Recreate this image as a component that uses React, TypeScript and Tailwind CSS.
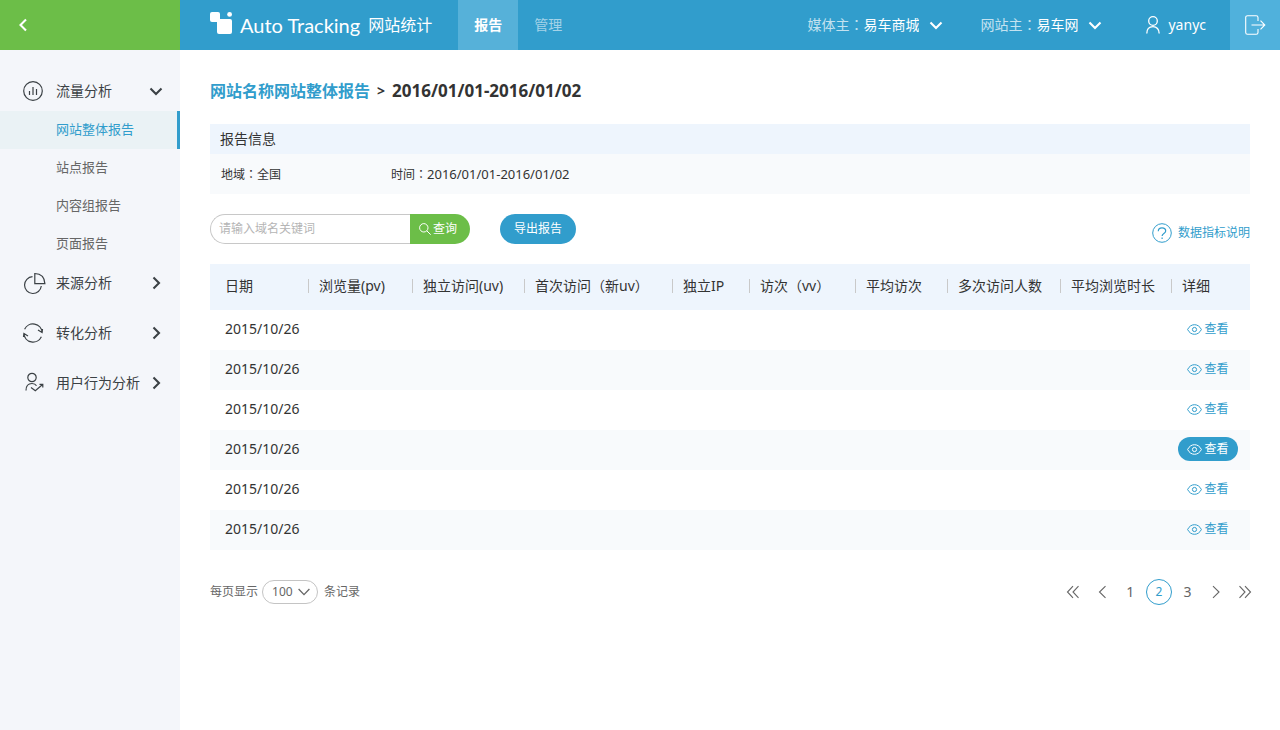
import type { ReactNode } from 'react';

type IconProps = { className?: string };

function Chevron({ dir, className = '' }: { dir: 'left' | 'right' | 'down'; className?: string }) {
  const paths = { left: 'M10 1.500 4.500 7l5.500 5.500', right: 'M4.500 1.500 10 7l-5.500 5.500', down: 'M1.500 4.500 7 10l5.500-5.500' };
  return (
    <svg viewBox="0 0 14 14" fill="none" stroke="currentColor" strokeWidth="2.100" className={`size-3.5 shrink-0 ${className}`} aria-hidden="true">
      <path d={paths[dir]} />
    </svg>
  );
}

function LogoMark() {
  return (
    <svg width="22" height="22" viewBox="0 0 22 22" fill="white" aria-hidden="true" className="shrink-0">
      <rect x="0" y="0" width="10" height="10" rx="2" />
      <rect x="7" y="7" width="15" height="15" rx="2" />
      <circle cx="19.6" cy="2.4" r="2.4" />
    </svg>
  );
}

function UserIcon() {
  return (
    <svg width="14" height="18" viewBox="0 0 14 18" fill="none" stroke="currentColor" strokeWidth="1.3" aria-hidden="true">
      <circle cx="7" cy="5" r="4.3" />
      <path d="M.8 17.6c0-4.4 2.5-7 6.2-7s6.2 2.600 6.200 7" />
    </svg>
  );
}

function LogoutIcon() {
  return (
    <svg width="21" height="20" viewBox="0 0 21 20" fill="none" stroke="currentColor" strokeWidth="1.100" aria-hidden="true">
      <path d="M13 6V2.500A1.800 1.800 0 0 0 11.200.7H2.500A1.800 1.800 0 0 0 .7 2.500v15a1.800 1.800 0 0 0 1.800 1.800h8.700a1.800 1.800 0 0 0 1.800-1.800V14" />
      <path d="M6.500 10h13.300M15.500 5.700 19.800 10l-4.300 4.300" />
    </svg>
  );
}

function TrafficIcon({ className }: IconProps) {
  return (
    <svg viewBox="0 0 22 22" fill="none" stroke="currentColor" strokeWidth="1.200" className={className} aria-hidden="true">
      <circle cx="11" cy="11" r="9.300" />
      <path d="M7.500 11v4M11 7v8M14.500 9v6" />
    </svg>
  );
}

function SourceIcon({ className }: IconProps) {
  return (
    <svg viewBox="0 0 22 22" fill="none" stroke="currentColor" strokeWidth="1.200" className={className} aria-hidden="true">
      <path d="M10.500 4.700a8.400 8.400 0 1 0 8.800 9.300" />
      <path d="M12.800 1.500v10.100h10.100C22.600 5.600 18.900 1.700 12.800 1.500z" />
    </svg>
  );
}

function ConvertIcon({ className }: IconProps) {
  return (
    <svg viewBox="0 0 22 22" fill="none" stroke="currentColor" strokeWidth="1.200" className={className} aria-hidden="true">
      <path d="M2.600 7.200a9.200 9.200 0 0 1 17.500 3.300M16 8l4.100 2.600L20.500 7M19.400 14.800A9.200 9.200 0 0 1 1.900 11.500M1.500 15l.4-3.600L6 14" />
    </svg>
  );
}

function BehaviorIcon({ className }: IconProps) {
  return (
    <svg viewBox="0 0 22 22" fill="none" stroke="currentColor" strokeWidth="1.200" className={className} aria-hidden="true">
      <circle cx="10" cy="5.500" r="4.200" />
      <path d="M4 18.500c0-4.500 2.300-7 6-7 2.200 0 3.700.8 4.500 2.200M9 15.500l4.300 3.300 7-6M17.500 12.400h3.300v3.200" />
    </svg>
  );
}

function EyeIcon() {
  return (
    <svg width="15" height="11" viewBox="0 0 15 11" fill="none" stroke="currentColor" strokeWidth="1" aria-hidden="true" className="shrink-0">
      <path d="M.6 5.500C2.300 2.200 4.700.7 7.500.7s5.200 1.500 6.900 4.800c-1.700 3.300-4.100 4.800-6.900 4.800S2.300 8.800.6 5.500z" />
      <circle cx="7.500" cy="5.500" r="2.100" />
    </svg>
  );
}

// Full-width punctuation, centred in its em box.
function Punct({ children }: { children: ReactNode }) {
  return <span lang="zh-TW" className="font-['Noto_Sans_CJK_TC',sans-serif] leading-none">{children}</span>;
}

function OwnerSelect({ id, label, value }: { id: string; label: string; value: string }) {
  return (
    <div className="flex items-center text-sm">
      <label htmlFor={id} className="text-[#c4e2f0]">
        {label}
        <Punct>：</Punct>
      </label>
      <div className="relative flex items-center">
        <select id={id} className="appearance-none bg-transparent pr-6 text-white outline-none">
          <option>{value}</option>
        </select>
        <Chevron dir="down" className="pointer-events-none absolute right-0" />
      </div>
    </div>
  );
}

function Header() {
  return (
    <header className="flex h-[50px] bg-[#319dcc] text-white">
      <button aria-label="收起菜单" className="flex w-[180px] shrink-0 items-center bg-[#6cbe48] pl-4">
        <Chevron dir="left" />
      </button>
      <div className="flex items-center pl-[30px]">
        <div className="flex items-center gap-2">
          <div className="pb-1">
            <LogoMark />
          </div>
          <span className="font-['Lato',sans-serif] text-[20px]">Auto Tracking</span>
          <span className="text-base">网站统计</span>
        </div>
        <nav className="ml-[26px] flex h-full text-sm">
          <a href="#report" className="flex w-[60px] items-center justify-center bg-[#56b1d9] font-bold">报告</a>
          <a href="#manage" className="flex w-[60px] items-center justify-center text-[#a5d3e8]">管理</a>
        </nav>
      </div>
      <div className="ml-auto flex items-center">
        <div className="flex items-center gap-[37px]">
          <OwnerSelect id="media-owner" label="媒体主" value="易车商城" />
          <OwnerSelect id="site-owner" label="网站主" value="易车网" />
        </div>
        <a href="#user" className="ml-11 flex items-center gap-2 text-sm">
          <UserIcon />
          yanyc
        </a>
        <button aria-label="退出" className="ml-6 flex h-full w-[50px] items-center justify-center bg-[#50b1dc]">
          <LogoutIcon />
        </button>
      </div>
    </header>
  );
}

function MenuGroup({ icon, label, open }: { icon: ReactNode; label: string; open?: boolean }) {
  return (
    <button aria-expanded={!!open} className="flex h-10 w-full items-center pr-[17px] pl-[22px] text-sm text-[#3b4145]">
      {icon}
      <span className="ml-3">{label}</span>
      <Chevron dir={open ? 'down' : 'right'} className="ml-auto" />
    </button>
  );
}

const reports = ['网站整体报告', '站点报告', '内容组报告', '页面报告'];

function Sidebar() {
  return (
    <aside className="w-[180px] shrink-0 bg-[#f4f6fa] pt-[21px]">
      <MenuGroup icon={<TrafficIcon className="size-[22px]" />} label="流量分析" open />
      <ul className="text-[13px] text-[#666]">
        {reports.map((name, i) => (
          <li key={name}>
            <a
              href="#report"
              className={
                i === 0
                  ? 'flex h-[38px] items-center border-r-3 border-[#319dcc] bg-[#eaf2f5] pl-14 text-[#319dcc]'
                  : 'flex h-[38px] items-center pl-14'
              }
            >
              {name}
            </a>
          </li>
        ))}
      </ul>
      <div className="flex flex-col gap-2.5">
        <MenuGroup icon={<SourceIcon className="size-[22px] overflow-visible" />} label="来源分析" />
        <MenuGroup icon={<ConvertIcon className="size-[22px]" />} label="转化分析" />
        <MenuGroup icon={<BehaviorIcon className="size-[22px]" />} label="用户行为分析" />
      </div>
    </aside>
  );
}

function Toolbar() {
  return (
    <div className="mt-5 flex items-end justify-between">
      <form className="flex h-[30px] text-xs" onSubmit={(e) => e.preventDefault()}>
        <input
          aria-label="域名关键词"
          placeholder="请输入域名关键词"
          className="w-[200px] rounded-l-full border border-r-0 border-[#c8c8c8] pl-2 outline-none placeholder:text-[#b5b5b5]"
        />
        <button className="flex w-[60px] items-center justify-center gap-0.5 rounded-r-full bg-[#6cbe48] pr-1 text-white">
          <svg width="12" height="12" viewBox="0 0 12 12" fill="none" stroke="currentColor" aria-hidden="true">
            <circle cx="4.800" cy="4.800" r="4.200" />
            <path d="m7.800 7.800 3.900 3.900" />
          </svg>
          查询
        </button>
        <button type="button" className="ml-[30px] w-[76px] rounded-full bg-[#319dcc] text-white">导出报告</button>
      </form>
      <a href="#help" className="flex h-[22px] items-center gap-1.5 text-xs text-[#319dcc]">
        <svg width="20" height="20" viewBox="0 0 20 20" fill="none" stroke="currentColor" aria-hidden="true">
          <circle cx="10" cy="10" r="9.300" />
          <path strokeWidth="1.200" d="M6.300 8.300C6.300 6 7.800 4.900 10 4.900s3.700 1.200 3.700 3.100c0 2.600-3.600 2.500-3.600 5M10.100 14.500v1.400" />
        </svg>
        数据指标说明
      </a>
    </div>
  );
}

const columns: { title: ReactNode; width: string }[] = [
  { title: '日期', width: 'w-[98px]' },
  { title: '浏览量(pv)', width: 'w-[104px]' },
  { title: '独立访问(uv)', width: 'w-[112px]' },
  { title: <>首次访问<Punct>（</Punct>新uv<Punct>）</Punct></>, width: 'w-[148px]' },
  { title: '独立IP', width: 'w-[77px]' },
  { title: <>访次<Punct>（</Punct>vv<Punct>）</Punct></>, width: 'w-[106px]' },
  { title: '平均访次', width: 'w-[92px]' },
  { title: '多次访问人数', width: 'w-[113px]' },
  { title: '平均浏览时长', width: 'w-[111px]' },
  { title: '详细', width: 'w-[79px]' },
];

const activeRow = 3;
const dates = ['2015/10/26', '2015/10/26', '2015/10/26', '2015/10/26', '2015/10/26', '2015/10/26'];

function ReportTable() {
  return (
    <table className="mt-5 w-full table-fixed text-left text-sm text-[#333]">
      <thead>
        <tr className="h-[46px] bg-[#eef5fd]">
          {columns.map((col, i) => (
            <th key={i} scope="col" className={`${col.width} p-0 pb-0.5 font-normal whitespace-nowrap`}>
              <div className={i === 0 ? 'flex h-3.5 items-center pl-[15px]' : 'flex h-3.5 items-center border-l border-[#c9c9c9] pl-2.5'}>
                <span>{col.title}</span>
              </div>
            </th>
          ))}
        </tr>
      </thead>
      <tbody>
        {dates.map((date, i) => (
          <tr key={i} className="h-10 even:bg-[#f8fafc]">
            <td className="p-0 pb-0.5 pl-[15px] whitespace-nowrap">{date}</td>
            {columns.slice(2).map((_, j) => (
              <td key={j} className="p-0" />
            ))}
            <td className="p-0 pb-0.5 pl-[7px]">
              <button
                className={
                  i === activeRow
                    ? 'flex h-6 w-[60px] items-center justify-center gap-0.5 rounded-full bg-[#319dcc] text-xs text-white'
                    : 'flex h-6 w-[60px] items-center justify-center gap-0.5 rounded-full text-xs text-[#319dcc]'
                }
              >
                <EyeIcon />
                查看
              </button>
            </td>
          </tr>
        ))}
      </tbody>
    </table>
  );
}

function PageArrow({ label, d }: { label: string; d: string }) {
  return (
    <button aria-label={label} className="flex size-[26px] items-center justify-center">
      <svg width="14" height="14" viewBox="0 0 14 14" fill="none" stroke="currentColor" strokeWidth="1.100" aria-hidden="true">
        <path d={d} />
      </svg>
    </button>
  );
}

function Pager() {
  return (
    <div className="mt-[29px] flex items-center justify-between text-[#666]">
      <div className="flex items-center text-xs">
        <label htmlFor="page-size">每页显示</label>
        <div className="relative mx-1 flex items-center">
          <select id="page-size" className="h-6 w-14 appearance-none rounded-full border border-[#c4c4c4] bg-white pl-[9px] text-xs outline-none">
            <option>100</option>
          </select>
          <svg width="12" height="8" viewBox="0 0 12 8" fill="none" stroke="currentColor" strokeWidth="1.300" aria-hidden="true" className="pointer-events-none absolute right-2">
            <path d="m.6 1 5.400 5.600L11.400 1" />
          </svg>
        </div>
        <span className="ml-0.5">条记录</span>
      </div>
      <nav aria-label="分页" className="-mr-2 flex w-[198px] items-center justify-between text-sm">
        <PageArrow label="首页" d="M7 1.200 1.500 7 7 12.800M12.500 1.200 7 7l5.500 5.800" />
        <PageArrow label="上一页" d="M10.500 1.200 4.500 7l6 5.800" />
        <button className="size-[26px]">1</button>
        <button aria-current="page" className="size-[26px] rounded-full border border-[#319dcc] text-xs text-[#319dcc]">2</button>
        <button className="size-[26px]">3</button>
        <PageArrow label="下一页" d="m4 1.200 6 5.800-6 5.800" />
        <PageArrow label="末页" d="M1.500 1.200 7 7l-5.500 5.800M7 1.200 12.500 7 7 12.800" />
      </nav>
    </div>
  );
}

export default function App() {
  return (
    <div className="flex min-h-screen flex-col bg-white font-['Noto_Sans','Noto_Sans_CJK_SC',sans-serif]" lang="zh-CN">
      <Header />
      <div className="flex flex-1">
        <Sidebar />
        <main className="min-w-0 flex-1 px-[30px] pt-[29px]">
          <h1 className="flex h-6 items-center gap-[7px] font-bold text-[#333]">
            <a href="#site" className="text-base text-[#319dcc]">网站名称网站整体报告</a>
            <span className="text-sm">&gt;</span>
            <span className="text-[17px]">2016/01/01-2016/01/02</span>
          </h1>
          <section className="mt-[21px] text-[#333]">
            <h2 className="flex h-[30px] items-center bg-[#eef5fd] pl-2.5 text-sm">报告信息</h2>
            <div className="flex h-10 items-baseline bg-[#f8fafc] pt-3 pl-[11px] text-xs">
              <span className="w-[170px]">地域<Punct>：</Punct>全国</span>
              <span>时间<Punct>：</Punct><span className="text-[13px]">2016/01/01-2016/01/02</span></span>
            </div>
          </section>
          <Toolbar />
          <ReportTable />
          <Pager />
        </main>
      </div>
    </div>
  );
}
